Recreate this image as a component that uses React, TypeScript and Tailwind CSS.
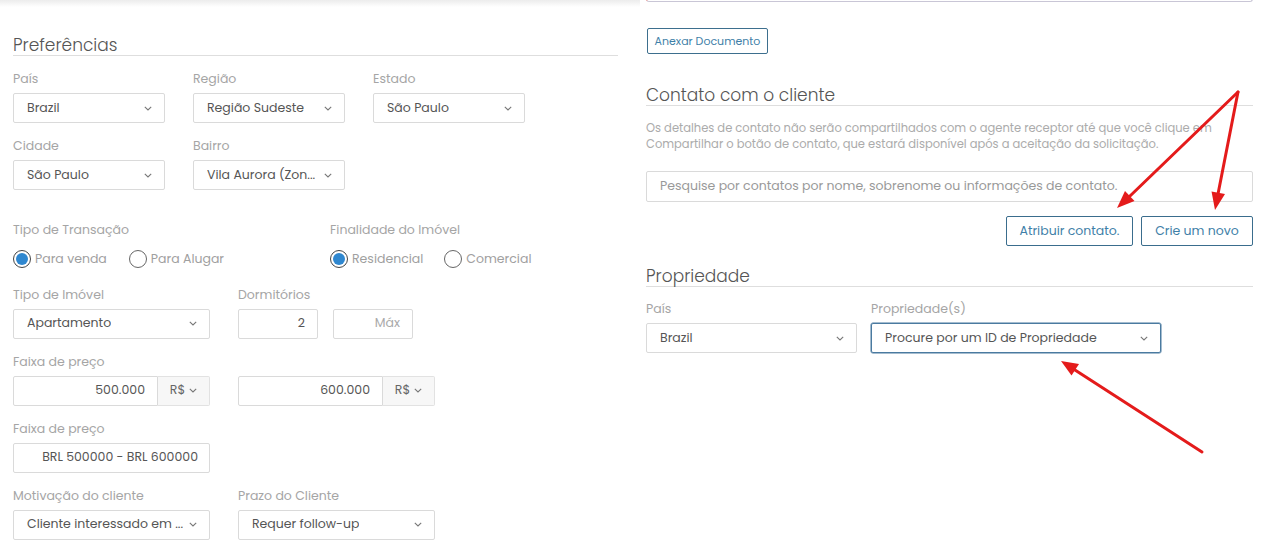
import React from "react";

const font = "font-['Poppins','Inter','Open_Sans',sans-serif]";

function Chevron() {
  return (
    <svg width="8" height="5" viewBox="0 0 8 5" className="shrink-0">
      <polyline points="0.8,0.8 4,4 7.2,0.8" fill="none" stroke="#777" strokeWidth="1.1" />
    </svg>
  );
}

function Label({ children }: { children: React.ReactNode }) {
  return <div className="text-[12.5px] leading-[18px] text-[#a5a5a5] mb-[5px]">{children}</div>;
}

function Select({ value, w, focused }: { value: string; w: string; focused?: boolean }) {
  return (
    <div
      className={`${w} h-[30px] rounded-[2px] border flex items-center justify-between pl-[13px] pr-[12px] text-[12.5px] text-[#555] ${
        focused ? "border-[#4a7aa0] shadow-[0_0_0_0.5px_#4a7aa0]" : "border-[#dadada]"
      }`}
    >
      <span className="truncate">{value}</span>
      <Chevron />
    </div>
  );
}

function Radio({ label, checked }: { label: string; checked?: boolean }) {
  return (
    <div className="flex items-center gap-[4px]">
      <span
        className={`w-[18px] h-[18px] rounded-full border flex items-center justify-center ${
          checked ? "border-[#444]" : "border-[#666]"
        }`}
      >
        {checked && <span className="w-[12px] h-[12px] rounded-full bg-[#2f87cf]" />}
      </span>
      <span className="text-[12.5px] text-[#a0a0a0]">{label}</span>
    </div>
  );
}

function Price({ value }: { value: string }) {
  return (
    <div className="w-[197px] h-[30px] flex text-[12.5px] text-[#555]">
      <div className="flex-1 border border-[#dadada] rounded-l-[2px] flex items-center justify-end pr-[12px]">
        {value}
      </div>
      <div className="w-[52px] border border-l-0 border-[#e2e2e2] bg-[#f7f7f7] rounded-r-[2px] flex items-center justify-center gap-[4px] text-[#666]">
        R$ <Chevron />
      </div>
    </div>
  );
}

function Heading({ children }: { children: React.ReactNode }) {
  return (
    <div className="text-[17px] font-light leading-[18px] text-[#555] border-b border-[#dedede] pb-[1px]">
      {children}
    </div>
  );
}

export default function App() {
  return (
    <div className={`relative w-[1266px] h-[553px] overflow-hidden bg-white flex ${font}`}>
      {/* top shadow from header above */}
      <div className="absolute top-0 left-0 w-[640px] h-[7px] bg-gradient-to-b from-[#ececec] to-white" />

      {/* Left column */}
      <div className="w-[605px] ml-[13px] pt-[36px]">
        <Heading>Preferências</Heading>

        <div className="flex gap-[28px] mt-[14px]">
          <div>
            <Label>País</Label>
            <Select value="Brazil" w="w-[152px]" />
          </div>
          <div>
            <Label>Região</Label>
            <Select value="Região Sudeste" w="w-[152px]" />
          </div>
          <div>
            <Label>Estado</Label>
            <Select value="São Paulo" w="w-[152px]" />
          </div>
        </div>

        <div className="flex gap-[28px] mt-[14px]">
          <div>
            <Label>Cidade</Label>
            <Select value="São Paulo" w="w-[152px]" />
          </div>
          <div>
            <Label>Bairro</Label>
            <Select value="Vila Aurora (Zon..." w="w-[152px]" />
          </div>
        </div>

        <div className="flex mt-[31px]">
          <div className="w-[317px]">
            <div className="text-[12.5px] leading-[18px] text-[#a5a5a5] mb-[11px]">Tipo de Transação</div>
            <div className="flex gap-[22px]">
              <Radio label="Para venda" checked />
              <Radio label="Para Alugar" />
            </div>
          </div>
          <div>
            <div className="text-[12.5px] leading-[18px] text-[#a5a5a5] mb-[11px]">Finalidade do Imóvel</div>
            <div className="flex gap-[21px]">
              <Radio label="Residencial" checked />
              <Radio label="Comercial" />
            </div>
          </div>
        </div>

        <div className="flex gap-[28px] mt-[17px]">
          <div>
            <Label>Tipo de Imóvel</Label>
            <Select value="Apartamento" w="w-[197px]" />
          </div>
          <div>
            <Label>Dormitórios</Label>
            <div className="flex gap-[15px] text-[12.5px]">
              <div className="w-[80px] h-[30px] border border-[#dadada] rounded-[2px] flex items-center justify-end pr-[12px] text-[#555]">
                2
              </div>
              <div className="w-[80px] h-[30px] border border-[#dadada] rounded-[2px] flex items-center justify-end pr-[12px] text-[#aaa]">
                Máx
              </div>
            </div>
          </div>
        </div>

        <div className="mt-[14px]">
          <Label>Faixa de preço</Label>
          <div className="flex gap-[28px]">
            <Price value="500.000" />
            <Price value="600.000" />
          </div>
        </div>

        <div className="mt-[14px]">
          <Label>Faixa de preço</Label>
          <div className="w-[197px] h-[30px] border border-[#dadada] rounded-[2px] flex items-center justify-end pr-[11px] text-[12.5px] text-[#555]">
            BRL 500000 - BRL 600000
          </div>
        </div>

        <div className="flex gap-[28px] mt-[14px]">
          <div>
            <Label>Motivação do cliente</Label>
            <Select value="Cliente interessado em ..." w="w-[197px]" />
          </div>
          <div>
            <Label>Prazo do Cliente</Label>
            <Select value="Requer follow-up" w="w-[197px]" />
          </div>
        </div>
      </div>

      {/* Right column */}
      <div className="w-[607px] ml-[28px]">
        <div className="h-[3px] -mt-[1px] border border-t-0 border-[#c9c6d6] rounded-b-[3px] border-l-[#e08080]" />

        <button className="mt-[26px] ml-[1px] w-[121px] h-[26px] border border-[#3d6f8e] rounded-[2px] text-[11px] text-[#3f7fa8] flex items-center justify-center">
          Anexar Documento
        </button>

        <div className="mt-[32px]">
          <Heading>Contato com o cliente</Heading>
        </div>
        <p className="mt-[14px] text-[11.5px] leading-[16px] text-[#ababab]">
          Os detalhes de contato não serão compartilhados com o agente receptor até que você clique em
          <br />
          Compartilhar o botão de contato, que estará disponível após a aceitação da solicitação.
        </p>

        <div className="mt-[19px] h-[31px] border border-[#dadada] rounded-[2px] flex items-center pl-[13px] text-[12.5px] text-[#999]">
          Pesquise por contatos por nome, sobrenome ou informações de contato.
        </div>

        <div className="flex justify-end gap-[8px] mt-[14px]">
          <button className="w-[127px] h-[30px] border border-[#3a6d8d] rounded-[2px] text-[12.5px] text-[#3f7fa8]">
            Atribuir contato.
          </button>
          <button className="w-[112px] h-[30px] border border-[#3a6d8d] rounded-[2px] text-[12.5px] text-[#3f7fa8]">
            Crie um novo
          </button>
        </div>

        <div className="mt-[21px]">
          <Heading>Propriedade</Heading>
        </div>

        <div className="flex gap-[14px] mt-[13px]">
          <div>
            <Label>País</Label>
            <Select value="Brazil" w="w-[211px]" />
          </div>
          <div>
            <Label>Propriedade(s)</Label>
            <Select value="Procure por um ID de Propriedade" w="w-[290px]" focused />
          </div>
        </div>
      </div>

      {/* annotation arrows */}
      <svg className="absolute inset-0 pointer-events-none" width="1266" height="553">
        <g stroke="#e41b1b" strokeWidth="3" strokeLinecap="round">
          <line x1="1238" y1="92" x2="1130" y2="196" />
          <line x1="1238" y1="92" x2="1218" y2="194" />
          <line x1="1202" y1="452" x2="1075" y2="370" />
        </g>
        <g fill="#e41b1b">
          <polygon points="1117,208 1134.5,201 1125,191" />
          <polygon points="1215,210 1225,194 1211.5,191.5" />
          <polygon points="1061,361 1079,364 1071.5,375.5" />
        </g>
      </svg>
    </div>
  );
}
